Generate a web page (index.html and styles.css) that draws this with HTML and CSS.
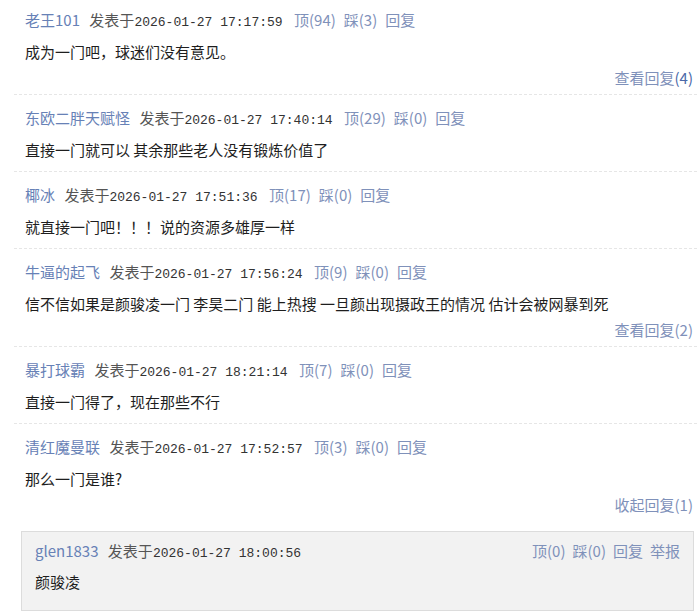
FILE: index.html
```html
<!DOCTYPE html>
<html lang="zh-CN">
<head>
    <meta charset="UTF-8">
    <title>评论</title>
    <link rel="stylesheet" href="styles.css">
</head>
<body>

    <div class="comments">

        <div class="comment">
            <div class="meta">
                <a class="user">老王101</a>
                <span class="posted">发表于<span class="time">2026-01-27 17:17:59</span></span>
                <a class="act">顶(94)</a><a class="act">踩(3)</a><a class="act">回复</a>
            </div>
            <p class="text">成为一门吧，球迷们没有意见。</p>
            <div class="toggle"><a>查看回复<span class="num">(4)</span></a></div>
        </div>

        <div class="comment">
            <div class="meta">
                <a class="user">东欧二胖天赋怪</a>
                <span class="posted">发表于<span class="time">2026-01-27 17:40:14</span></span>
                <a class="act">顶(29)</a><a class="act">踩(0)</a><a class="act">回复</a>
            </div>
            <p class="text">直接一门就可以 其余那些老人没有锻炼价值了</p>
        </div>

        <div class="comment">
            <div class="meta">
                <a class="user">椰冰</a>
                <span class="posted">发表于<span class="time">2026-01-27 17:51:36</span></span>
                <a class="act">顶(17)</a><a class="act">踩(0)</a><a class="act">回复</a>
            </div>
            <p class="text">就直接一门吧！！！说的资源多雄厚一样</p>
        </div>

        <div class="comment">
            <div class="meta">
                <a class="user">牛逼的起飞</a>
                <span class="posted">发表于<span class="time">2026-01-27 17:56:24</span></span>
                <a class="act">顶(9)</a><a class="act">踩(0)</a><a class="act">回复</a>
            </div>
            <p class="text">信不信如果是颜骏凌一门 李昊二门 能上热搜 一旦颜出现摄政王的情况 估计会被网暴到死</p>
            <div class="toggle"><a>查看回复(2)</a></div>
        </div>

        <div class="comment">
            <div class="meta">
                <a class="user">暴打球霸</a>
                <span class="posted">发表于<span class="time">2026-01-27 18:21:14</span></span>
                <a class="act">顶(7)</a><a class="act">踩(0)</a><a class="act">回复</a>
            </div>
            <p class="text">直接一门得了，现在那些不行</p>
        </div>

        <div class="comment last">
            <div class="meta">
                <a class="user">清红魔曼联</a>
                <span class="posted">发表于<span class="time">2026-01-27 17:52:57</span></span>
                <a class="act">顶(3)</a><a class="act">踩(0)</a><a class="act">回复</a>
            </div>
            <p class="text">那么一门是谁?</p>
            <div class="toggle"><a>收起回复(1)</a></div>

            <!-- replies -->
            <div class="replies">
                <div class="reply">
                    <div class="meta reply-meta">
                        <span>
                            <a class="user">glen1833</a>
                            <span class="posted">发表于<span class="time">2026-01-27 18:00:56</span></span>
                        </span>
                        <span class="actions">
                            <a class="act">顶(0)</a><a class="act">踩(0)</a><a class="act">回复</a><a class="act">举报</a>
                        </span>
                    </div>
                    <p class="text">颜骏凌</p>
                </div>
            </div>
        </div>

    </div>

</body>
</html>
```

FILE: styles.css
```css
body {
    margin: 0;
    padding: 0;
    background: #fff;
    font-family: "Noto Sans CJK SC", sans-serif;
    color: #222;
}

a {
    cursor: pointer;
}

.comments {
    margin: 0 3px 0 14px;
}

.comment {
    padding: 11px 4px 9px 11px;
    border-bottom: 1px dashed #e6e6e6;
}

.comment:first-child {
    padding-top: 8px;
}

.comment.last {
    border-bottom: none;
}

.meta {
    font-size: 15px;
    line-height: 24px;
    height: 24px;
    white-space: nowrap;
}

.user {
    color: #6781b6;
    margin-right: 6px;
}

.posted {
    color: #555;
}

.time {
    font-family: "Liberation Mono", monospace;
    font-size: 13px;
    line-height: 13px;
    color: #333;
}

.act {
    color: #7f91ba;
    margin-left: 8px;
}

.text {
    margin: 8px 0 0;
    font-size: 15px;
    line-height: 24px;
    height: 24px;
    color: #1e1e1e;
}

.toggle {
    margin-top: 7px;
    text-align: right;
    font-size: 15px;
    line-height: 14px;
    height: 14px;
    color: #7f91ba;
}

.toggle .num {
    color: #4a68a8;
}

.replies {
    margin: 19px -1px 0 -4px;
}

.reply {
    background: #f2f2f2;
    border: 1px solid #dcdcdc;
    padding: 9px 13px 16px;
}

.reply .text {
    margin-top: 9px;
}

.reply-meta {
    display: flex;
    justify-content: space-between;
    line-height: 20px;
    height: 20px;
}

.reply-meta .act {
    margin-left: 7px;
}
```
